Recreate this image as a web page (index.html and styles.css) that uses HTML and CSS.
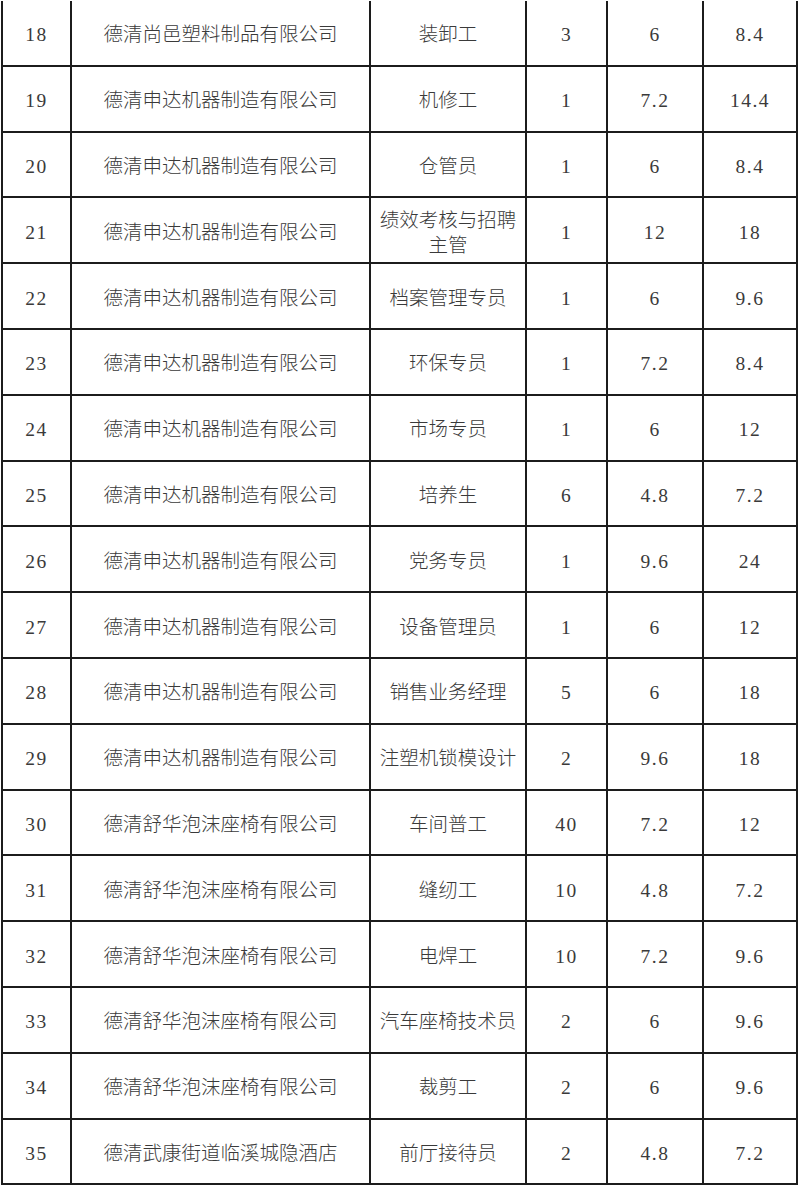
FILE: index.html
```html
<!DOCTYPE html>
<html lang="zh-CN">
<head>
<meta charset="utf-8">
<title>招聘岗位表</title>
<link rel="stylesheet" href="styles.css">
</head>
<body>
<div class="table">
  <div class="c num">18</div><div class="c">德清尚邑塑料制品有限公司</div><div class="c">装卸工</div><div class="c num">3</div><div class="c num">6</div><div class="c num">8.4</div>
  <div class="c num">19</div><div class="c">德清申达机器制造有限公司</div><div class="c">机修工</div><div class="c num">1</div><div class="c num">7.2</div><div class="c num">14.4</div>
  <div class="c num">20</div><div class="c">德清申达机器制造有限公司</div><div class="c">仓管员</div><div class="c num">1</div><div class="c num">6</div><div class="c num">8.4</div>
  <div class="c num">21</div><div class="c">德清申达机器制造有限公司</div><div class="c two">绩效考核与招聘<br>主管</div><div class="c num">1</div><div class="c num">12</div><div class="c num">18</div>
  <div class="c num">22</div><div class="c">德清申达机器制造有限公司</div><div class="c">档案管理专员</div><div class="c num">1</div><div class="c num">6</div><div class="c num">9.6</div>
  <div class="c num">23</div><div class="c">德清申达机器制造有限公司</div><div class="c">环保专员</div><div class="c num">1</div><div class="c num">7.2</div><div class="c num">8.4</div>
  <div class="c num">24</div><div class="c">德清申达机器制造有限公司</div><div class="c">市场专员</div><div class="c num">1</div><div class="c num">6</div><div class="c num">12</div>
  <div class="c num">25</div><div class="c">德清申达机器制造有限公司</div><div class="c">培养生</div><div class="c num">6</div><div class="c num">4.8</div><div class="c num">7.2</div>
  <div class="c num">26</div><div class="c">德清申达机器制造有限公司</div><div class="c">党务专员</div><div class="c num">1</div><div class="c num">9.6</div><div class="c num">24</div>
  <div class="c num">27</div><div class="c">德清申达机器制造有限公司</div><div class="c">设备管理员</div><div class="c num">1</div><div class="c num">6</div><div class="c num">12</div>
  <div class="c num">28</div><div class="c">德清申达机器制造有限公司</div><div class="c">销售业务经理</div><div class="c num">5</div><div class="c num">6</div><div class="c num">18</div>
  <div class="c num">29</div><div class="c">德清申达机器制造有限公司</div><div class="c">注塑机锁模设计</div><div class="c num">2</div><div class="c num">9.6</div><div class="c num">18</div>
  <div class="c num">30</div><div class="c">德清舒华泡沫座椅有限公司</div><div class="c">车间普工</div><div class="c num">40</div><div class="c num">7.2</div><div class="c num">12</div>
  <div class="c num">31</div><div class="c">德清舒华泡沫座椅有限公司</div><div class="c">缝纫工</div><div class="c num">10</div><div class="c num">4.8</div><div class="c num">7.2</div>
  <div class="c num">32</div><div class="c">德清舒华泡沫座椅有限公司</div><div class="c">电焊工</div><div class="c num">10</div><div class="c num">7.2</div><div class="c num">9.6</div>
  <div class="c num">33</div><div class="c">德清舒华泡沫座椅有限公司</div><div class="c">汽车座椅技术员</div><div class="c num">2</div><div class="c num">6</div><div class="c num">9.6</div>
  <div class="c num">34</div><div class="c">德清舒华泡沫座椅有限公司</div><div class="c">裁剪工</div><div class="c num">2</div><div class="c num">6</div><div class="c num">9.6</div>
  <div class="c num">35</div><div class="c">德清武康街道临溪城隐酒店</div><div class="c">前厅接待员</div><div class="c num">2</div><div class="c num">4.8</div><div class="c num">7.2</div>
</div>
</body>
</html>
```

FILE: styles.css
```css
html, body {
  margin: 0;
  padding: 0;
  background: #ffffff;
}

body {
  width: 800px;
  height: 1186px;
  overflow: hidden;
}

.table {
  margin: 1px 0 0 1px;
  display: grid;
  grid-template-columns: 69px 299px 156px 81px 96px 94px;
  grid-auto-rows: 65.8px;
  border-left: 2px solid #1c1c1c;
  width: 795px;
  font-family: "Liberation Serif", "Noto Sans CJK SC", serif;
  font-size: 19.5px;
  font-weight: 300;
  color: #3a3a3a;
}

.c {
  border-right: 2px solid #1c1c1c;
  border-bottom: 2px solid #1c1c1c;
  display: flex;
  align-items: center;
  justify-content: center;
  text-align: center;
  padding-top: 4px;
  box-sizing: border-box;
  line-height: 25px;
  white-space: nowrap;
  overflow: hidden;
}

.num {
  letter-spacing: 1.5px;
}

.two {
  padding-top: 5px;
}
```
